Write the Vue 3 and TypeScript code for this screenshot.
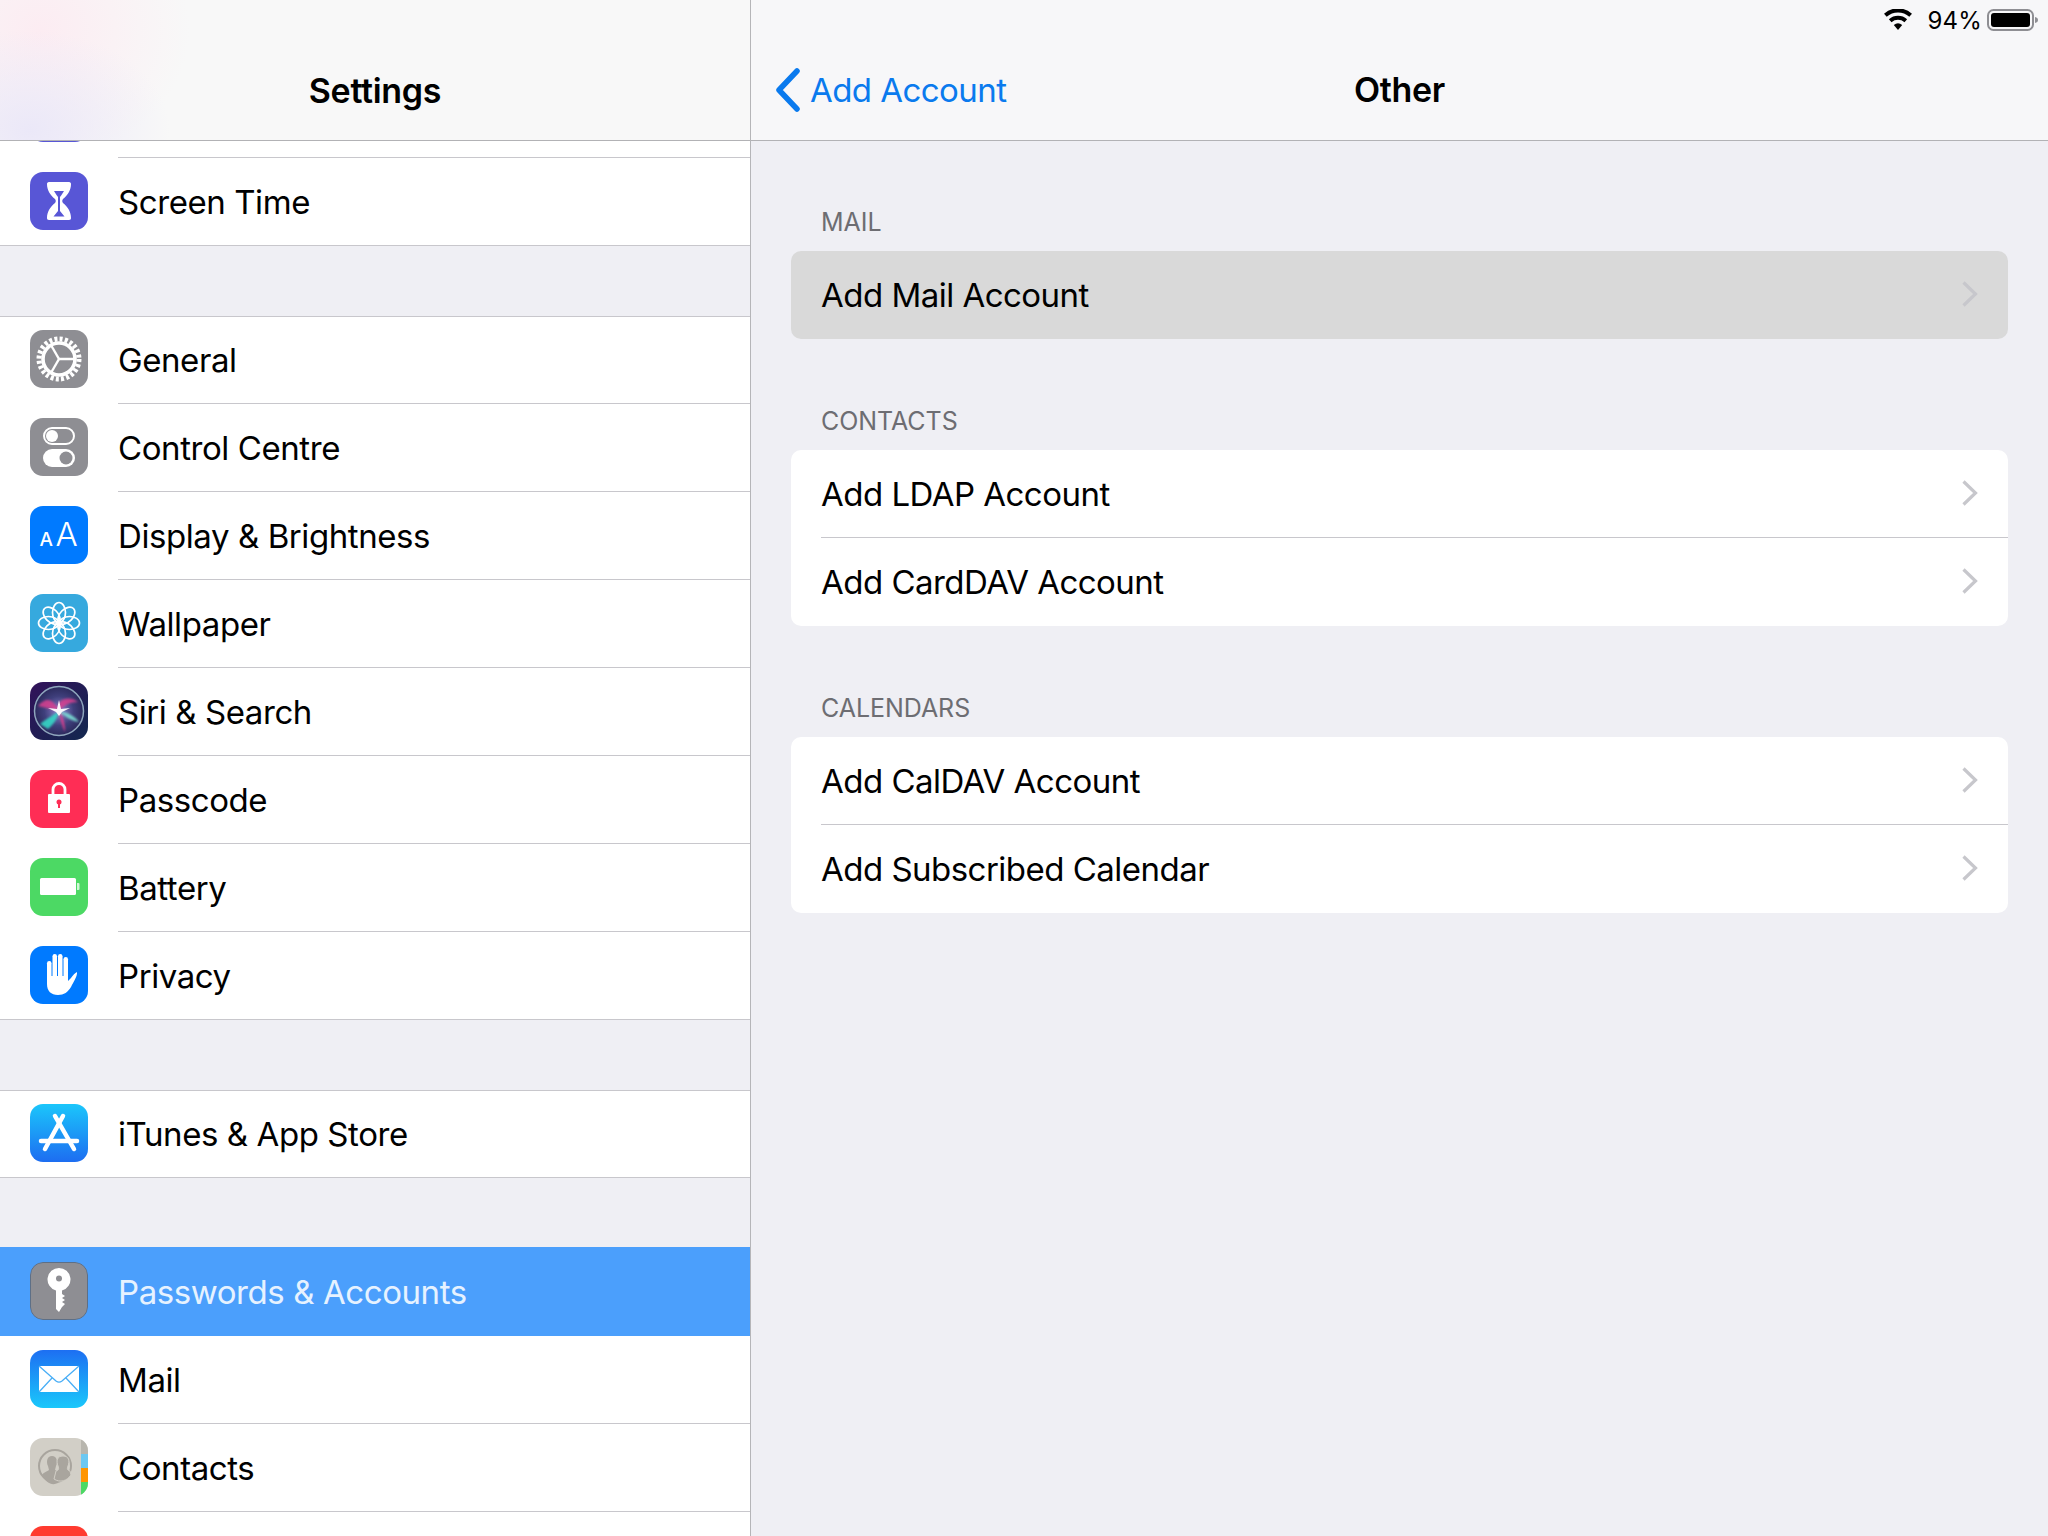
<script setup lang="ts">
interface Row { label: string; icon: string; selected?: boolean }
const groups: { rows: Row[]; first?: boolean; last?: boolean }[] = [
  { first: true, rows: [{ label: '', icon: 'indigo' }, { label: 'Screen Time', icon: 'hourglass' }] },
  { rows: [
    { label: 'General', icon: 'gear' },
    { label: 'Control Centre', icon: 'toggles' },
    { label: 'Display & Brightness', icon: 'display' },
    { label: 'Wallpaper', icon: 'flower' },
    { label: 'Siri & Search', icon: 'siri' },
    { label: 'Passcode', icon: 'lock' },
    { label: 'Battery', icon: 'battery' },
    { label: 'Privacy', icon: 'hand' },
  ] },
  { rows: [{ label: 'iTunes & App Store', icon: 'store' }] },
  { last: true, rows: [
    { label: 'Passwords & Accounts', icon: 'key', selected: true },
    { label: 'Mail', icon: 'mail' },
    { label: 'Contacts', icon: 'contacts' },
    { label: '', icon: 'red' },
  ] },
]
const sections = [
  { title: 'MAIL', rows: ['Add Mail Account'], pressed: true },
  { title: 'CONTACTS', rows: ['Add LDAP Account', 'Add CardDAV Account'] },
  { title: 'CALENDARS', rows: ['Add CalDAV Account', 'Add Subscribed Calendar'] },
]
const petals = [0, 45, 90, 135, 180, 225, 270, 315]
const spokes = [0, 120, 240]
</script>

<template>
  <div class="screen">
    <aside class="sidebar">
      <header class="nav sidebar-nav"><span class="nav-title">Settings</span></header>
      <div class="list">
        <section
          v-for="(g, gi) in groups"
          :key="gi"
          class="group"
          :class="{ 'group-first': g.first, 'group-last': g.last }"
        >
          <div v-for="r in g.rows" :key="r.icon" class="row" :class="{ selected: r.selected }">
            <svg class="icon" viewBox="0 0 58 58" width="58" height="58">
              <defs>
                <clipPath :id="'c-' + r.icon"><rect width="58" height="58" rx="13" /></clipPath>
                <linearGradient id="g-store" x1="0" y1="0" x2="0" y2="1">
                  <stop offset="0" stop-color="#1bc6fb" /><stop offset="1" stop-color="#1d6df1" />
                </linearGradient>
                <linearGradient id="g-mail" x1="0" y1="0" x2="0" y2="1">
                  <stop offset="0" stop-color="#1d6ff2" /><stop offset="1" stop-color="#1ac8fb" />
                </linearGradient>
                <linearGradient id="g-siri" x1="0" y1="0" x2="1" y2="1">
                  <stop offset="0" stop-color="#32125a" /><stop offset="1" stop-color="#12284f" />
                </linearGradient>
                <radialGradient id="g-siri-disc">
                  <stop offset="0" stop-color="#8f84cf" /><stop offset="0.6" stop-color="#3f3f7c" /><stop offset="1" stop-color="#2b2a5c" />
                </radialGradient>
                <filter id="f-soft" x="-20%" y="-20%" width="140%" height="140%"><feGaussianBlur stdDeviation="1.100" /></filter>
              </defs>
              <g :clip-path="'url(#c-' + r.icon + ')'">
                <template v-if="r.icon === 'indigo'"><rect width="58" height="58" fill="#5856d6" /></template>
                <template v-else-if="r.icon === 'hourglass'">
                  <rect width="58" height="58" fill="#5856d6" />
                  <path d="M19 10h20c1.500 0 2 1 2 2 0 6-3 11-8 15-1 1-1 3 0 4 5 4 8 9 8 15 0 1-.5 2-2 2H19c-1.500 0-2-1-2-2 0-6 3-11 8-15 1-1 1-3 0-4-5-4-8-9-8-15 0-1 .5-2 2-2z" fill="#fff" />
                  <path d="M24 19h10l-2.500 4-1.500 2v14l4.500 5.500h-11L28 39V25l-1.500-2z" fill="#5856d6" />
                </template>
                <template v-else-if="r.icon === 'gear'">
                  <rect width="58" height="58" fill="#8e8e93" />
                  <circle cx="29" cy="29" r="20" fill="none" stroke="#fff" stroke-width="5" stroke-dasharray="3 2.236" />
                  <circle cx="29" cy="29" r="16" fill="none" stroke="#fff" stroke-width="3.600" />
                  <line v-for="s in spokes" :key="s" x1="29" y1="29" x2="44" y2="29" stroke="#fff" stroke-width="2.400" :transform="'rotate(' + s + ' 29 29)'" />
                </template>
                <template v-else-if="r.icon === 'toggles'">
                  <rect width="58" height="58" fill="#8e8e93" />
                  <rect x="14" y="10" width="30" height="16" rx="8" fill="none" stroke="#fff" stroke-width="2" />
                  <circle cx="22" cy="18" r="6" fill="#fff" />
                  <rect x="13" y="31" width="32" height="18" rx="9" fill="#fff" />
                  <circle cx="36" cy="40" r="6.500" fill="#8e8e93" />
                </template>
                <template v-else-if="r.icon === 'display'">
                  <rect width="58" height="58" fill="#007aff" />
                  <text x="9.500" y="39.500" class="aa" font-size="19" font-weight="500">A</text>
                  <text x="25.500" y="39.500" class="aa" font-size="33" font-weight="300">A</text>
                </template>
                <template v-else-if="r.icon === 'flower'">
                  <rect width="58" height="58" fill="#36a9de" />
                  <ellipse v-for="p in petals" :key="p" cx="29" cy="18.500" rx="6.500" ry="10" fill="none" stroke="#fff" stroke-width="1.700" :transform="'rotate(' + p + ' 29 29)'" />
                  <circle cx="29" cy="29" r="3" fill="#fff" />
                </template>
                <template v-else-if="r.icon === 'siri'">
                  <rect width="58" height="58" fill="url(#g-siri)" />
                  <circle cx="29" cy="29" r="24.500" fill="url(#g-siri-disc)" stroke="#8fa6bd" stroke-width="1.500" />
                  <g filter="url(#f-soft)">
                    <path d="M8 24C18 12 25 20 29 29 24 19 38 12 48 20 38 20 33 25 29 29z" fill="#d9418f" opacity=".85" />
                    <path d="M10 42C18 36 25 32 29 29 28 36 24 42 18 47z" fill="#35d7c5" opacity=".9" />
                    <path d="M29 29C36 30 44 33 49 40 42 39 35 35 29 29z" fill="#7ee5d8" opacity=".85" />
                    <path d="M29 29C33 34 35 42 35 50 32 44 30 36 29 29z" fill="#e23c8c" opacity=".9" />
                  </g>
                  <path d="M29 18l2 9 9-1-8 4-3 4-3-4-8-4 9 1z" fill="#fff" opacity=".95" />
                </template>
                <template v-else-if="r.icon === 'lock'">
                  <rect width="58" height="58" fill="#ff2d55" />
                  <path d="M23 25v-5.500a6 6 0 0 1 12 0V25" fill="none" stroke="#fff" stroke-width="2.800" />
                  <rect x="18" y="24" width="22" height="19" rx="1" fill="#fff" />
                  <circle cx="29" cy="32" r="2.500" fill="#ff2d55" />
                  <rect x="28" y="32" width="2" height="6" fill="#ff2d55" />
                </template>
                <template v-else-if="r.icon === 'battery'">
                  <rect width="58" height="58" fill="#4cd964" />
                  <rect x="10" y="20" width="36" height="17" rx="1.500" fill="#fff" />
                  <path d="M47 25h1.500a1 1 0 0 1 1 1v5a1 1 0 0 1-1 1H47z" fill="#fff" opacity=".75" />
                </template>
                <template v-else-if="r.icon === 'hand'">
                  <rect width="58" height="58" fill="#007aff" />
                  <rect x="17" y="15" width="4.500" height="22" rx="2.200" fill="#fff" />
                  <rect x="22.500" y="8" width="4.500" height="30" rx="2.200" fill="#fff" />
                  <rect x="28" y="8" width="4.500" height="30" rx="2.200" fill="#fff" />
                  <rect x="33.500" y="11" width="4.500" height="27" rx="2.200" fill="#fff" />
                  <path d="M17 30H38V35L41 32C43 29 45 27 47 26 47.500 30 44 35 41 41 38 46 34 49 28 49 21 49 17 45 17 38Z" fill="#fff" />
                </template>
                <template v-else-if="r.icon === 'store'">
                  <rect width="58" height="58" fill="url(#g-store)" />
                  <g stroke="#fff" stroke-width="4.500" stroke-linecap="round">
                    <line x1="33" y1="12" x2="15" y2="45" />
                    <line x1="25" y1="12" x2="44" y2="45" />
                    <line x1="11" y1="37" x2="47" y2="37" />
                  </g>
                </template>
                <template v-else-if="r.icon === 'key'">
                  <rect x=".5" y=".5" width="57" height="57" rx="12.500" fill="#8e8e93" stroke="#5d6f86" />
                  <path d="M29 6a11.500 11.500 0 0 1 3 22.600V32l3 2-3 2 3 2-3 2 3 2-3 3-3 5-3-3V28.600A11.500 11.500 0 0 1 29 6z" fill="#fff" />
                  <circle cx="29" cy="16.500" r="3" fill="#8e8e93" />
                </template>
                <template v-else-if="r.icon === 'mail'">
                  <rect width="58" height="58" fill="url(#g-mail)" />
                  <rect x="9" y="16" width="40" height="26" rx="1.500" fill="#fff" />
                  <path d="M9 16l17 15c2 1.600 4 1.600 6 0l17-15M9 42l13-14M49 42L36 28" fill="none" stroke="#49aef6" stroke-width="1.300" />
                </template>
                <template v-else-if="r.icon === 'contacts'">
                  <rect width="58" height="58" fill="#d2cfc7" />
                  <rect x="51" width="7" height="16" fill="#b8b6ae" />
                  <rect x="51" y="16" width="7" height="14" fill="#6cc8f2" />
                  <rect x="51" y="30" width="7" height="14" fill="#ff9500" />
                  <rect x="51" y="44" width="7" height="14" fill="#4cd964" />
                  <circle cx="25" cy="28" r="16" fill="none" stroke="#a9a59e" stroke-width="2" />
                  <path d="M12 37c2-3 4-3 7-5l-1-4c-2-4-1-10 4-10s6 6 4 10l-1 4c2 1 3 2 5 3l-2 10c-6 3-12 0-16-8z" fill="#a9a59e" />
                  <path d="M24 41l2-8c3-1 3-2 2-5-2-5-1-10 5-10s7 5 5 10c-1 3-1 4 2 5l1 4c-4 6-11 8-17 4z" fill="#a9a59e" stroke="#d2cfc7" />
                </template>
                <template v-else><rect width="58" height="58" fill="#ff3b30" /></template>
              </g>
            </svg>
            <span class="row-label">{{ r.label }}</span>
          </div>
        </section>
      </div>
    </aside>

    <main class="detail">
      <header class="nav detail-nav">
        <div class="status">
          <svg width="30" height="22" viewBox="0 0 30 22">
            <path d="M15 21l-4.200-5a6.500 6.500 0 0 1 8.400 0z" fill="#000" />
            <path d="M8.500 13.200l-2.600-3a14 14 0 0 1 18.200 0l-2.600 3a10 10 0 0 0-13 0z" fill="#000" />
            <path d="M3.700 7.700L1 4.700a21 21 0 0 1 28 0l-2.700 3a17 17 0 0 0-22.600 0z" fill="#000" />
          </svg>
          <span class="pct">94%</span>
          <svg class="batt" width="53" height="24" viewBox="0 0 53 24">
            <rect x="1" y="2" width="45" height="20" rx="5.500" fill="none" stroke="#8e8e93" stroke-width="2" />
            <rect x="4" y="5" width="39" height="14" rx="3" fill="#000" />
            <path d="M48 9c2 .3 3 1.500 3 3s-1 2.700-3 3z" fill="#8e8e93" />
          </svg>
        </div>
        <div class="detail-bar">
          <div class="back">
            <svg width="26" height="44" viewBox="0 0 26 44">
              <path d="M22 3L4 22l18 19" fill="none" stroke="#0a7aee" stroke-width="5.500" stroke-linecap="round" stroke-linejoin="round" />
            </svg>
            <span>Add Account</span>
          </div>
          <span class="nav-title">Other</span>
          <span></span>
        </div>
      </header>
      <div class="content">
        <section v-for="s in sections" :key="s.title" class="section">
          <h2 class="section-title">{{ s.title }}</h2>
          <div class="card" :class="{ pressed: s.pressed }">
            <div v-for="t in s.rows" :key="t" class="card-row">
              <div class="card-inner">
                <span>{{ t }}</span>
                <svg class="chev" width="18" height="28" viewBox="0 0 18 28">
                  <path d="M2.500 2.500L14.500 14 2.500 25.500" fill="none" stroke="#c7c7cc" stroke-width="3.200" />
                </svg>
              </div>
            </div>
          </div>
        </section>
      </div>
    </main>
  </div>
</template>

<style scoped>
.screen {
  display: flex;
  width: 2048px;
  height: 1536px;
  overflow: hidden;
  background: #efeff4;
  font-family: Inter, "Liberation Sans", sans-serif;
  color: #000;
}
.sidebar {
  width: 751px;
  flex: none;
  display: flex;
  flex-direction: column;
  border-right: 1px solid #b5b5b8;
  box-sizing: border-box;
}
.nav {
  height: 141px;
  flex: none;
  box-sizing: border-box;
  border-bottom: 1px solid #b2b2b5;
  background: #f7f7f9;
}
.sidebar-nav {
  display: flex;
  justify-content: center;
  align-items: center;
  padding-top: 40px;
  background:
    radial-gradient(ellipse 140px 100px at 30px 130px, #ebe8f8 0%, rgba(235, 232, 248, 0) 100%),
    radial-gradient(ellipse 150px 130px at 40px 30px, #fcecf2 0%, rgba(252, 236, 242, 0) 100%),
    #f8f8f8;
}
.nav-title {
  font-size: 34px;
  font-weight: 600;
  letter-spacing: -0.3px;
}
.list {
  flex: 1;
  min-height: 0;
  overflow: hidden;
}
.group {
  margin-top: 70px;
  background: #fff;
  box-shadow: inset 0 1px 0 #c8c7cc;
}
.group-first {
  margin-top: -71px;
  box-shadow: none;
}
.group-last {
  box-shadow: none;
}
.row {
  display: flex;
  height: 88px;
  box-sizing: border-box;
  padding-top: 14px;
  padding-left: 30px;
  position: relative;
}
.row::after {
  content: "";
  position: absolute;
  left: 118px;
  right: 0;
  bottom: 0;
  height: 1px;
  background: #c8c7cc;
}
.row:last-child::after {
  left: 0;
}
.row.selected {
  margin-top: -1px;
  height: 89px;
  padding-top: 15px;
  background: #4b9ffc;
  color: #e6f2ff;
}
.row.selected::after {
  display: none;
}
.icon {
  flex: none;
  display: block;
}
.row-label {
  margin-left: 30px;
  height: 60px;
  display: flex;
  align-items: center;
  font-size: 33px;
  letter-spacing: -0.42px;
  white-space: nowrap;
}
.aa {
  fill: #fff;
  font-family: Inter, sans-serif;
}
.detail {
  flex: 1;
  min-width: 0;
  display: flex;
  flex-direction: column;
}
.detail-nav {
  display: flex;
  flex-direction: column;
}
.status {
  height: 40px;
  display: flex;
  justify-content: flex-end;
  align-items: center;
  gap: 14px;
  padding-right: 8px;
}
.batt {
  margin-left: -9px;
}
.pct {
  font-size: 24px;
  letter-spacing: 0.2px;
}
.detail-bar {
  flex: 1;
  display: grid;
  grid-template-columns: 1fr auto 1fr;
  align-items: center;
  padding-bottom: 1px;
}
.back {
  display: flex;
  align-items: center;
  gap: 9px;
  padding-left: 24px;
  color: #0a7aee;
  font-size: 33px;
  letter-spacing: -0.55px;
  white-space: nowrap;
}
.content {
  padding: 0 40px;
}
.section-title {
  margin: 0;
  height: 111px;
  box-sizing: border-box;
  padding: 0 0 13px 30px;
  display: flex;
  align-items: flex-end;
  font-size: 25px;
  font-weight: 400;
  line-height: 32px;
  letter-spacing: -0.05px;
  color: #6d6d72;
}
.section:first-child .section-title {
  height: 110px;
}
.card {
  background: #fff;
  border-radius: 10px;
  overflow: hidden;
}
.card.pressed {
  background: #d9d9d9;
}
.card-row {
  height: 88px;
  padding-left: 30px;
}
.card-inner {
  height: 100%;
  box-sizing: border-box;
  display: flex;
  justify-content: space-between;
  align-items: center;
  padding-right: 29px;
  border-bottom: 1px solid #c8c7cc;
  font-size: 33px;
  letter-spacing: -0.52px;
}
.chev {
  margin-bottom: 2px;
}
.card-row:last-child .card-inner {
  border-bottom: 0;
}
</style>

<style>
html, body { margin: 0; background: #efeff4; }
</style>
